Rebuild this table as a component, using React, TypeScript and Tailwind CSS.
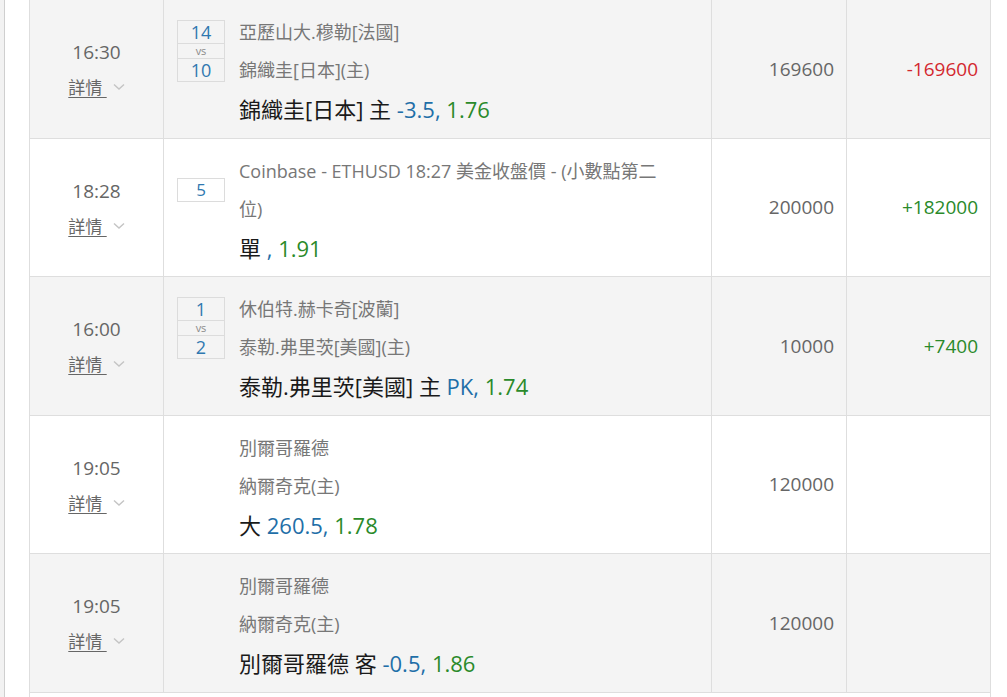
import React from 'react';

type Bet = {
  time: string;
  scores?: [string, string] | string;
  home?: string;
  away?: string;
  title?: string;
  label: string;
  line: string;
  odds: string;
  stake: string;
  result?: string;
};

const bets: Bet[] = [
  {
    time: '16:30',
    scores: ['14', '10'],
    home: '亞歷山大.穆勒[法國]',
    away: '錦織圭[日本](主)',
    label: '錦織圭[日本] 主',
    line: '-3.5',
    odds: '1.76',
    stake: '169600',
    result: '-169600',
  },
  {
    time: '18:28',
    scores: '5',
    title: 'Coinbase - ETHUSD 18:27 美金收盤價 - (小數點第二位)',
    label: '單',
    line: '',
    odds: '1.91',
    stake: '200000',
    result: '+182000',
  },
  {
    time: '16:00',
    scores: ['1', '2'],
    home: '休伯特.赫卡奇[波蘭]',
    away: '泰勒.弗里茨[美國](主)',
    label: '泰勒.弗里茨[美國] 主',
    line: 'PK',
    odds: '1.74',
    stake: '10000',
    result: '+7400',
  },
  {
    time: '19:05',
    home: '別爾哥羅德',
    away: '納爾奇克(主)',
    label: '大',
    line: '260.5',
    odds: '1.78',
    stake: '120000',
  },
  {
    time: '19:05',
    home: '別爾哥羅德',
    away: '納爾奇克(主)',
    label: '別爾哥羅德 客',
    line: '-0.5',
    odds: '1.86',
    stake: '120000',
  },
];

const ScoreBox = ({ scores }: { scores?: Bet['scores'] }) => {
  if (!scores) return null;
  if (typeof scores === 'string') {
    return (
      <div className="w-[48px] h-[24px] border border-[#dcdcdc] flex items-center justify-center text-[17px] text-[#2f78b0]">
        {scores}
      </div>
    );
  }
  return (
    <div className="w-[48px] border border-[#dcdcdc] flex flex-col text-[#2f78b0]">
      <div className="h-[22px] flex items-center justify-center text-[18px] leading-[22px]">{scores[0]}</div>
      <div className="h-[16px] border-y border-[#dcdcdc] text-center text-[11px] leading-[13px] text-[#8a8a8a]">vs</div>
      <div className="h-[22px] flex items-center justify-center text-[18px] leading-[22px]">{scores[1]}</div>
    </div>
  );
};

const Row = ({ bet, shaded }: { bet: Bet; shaded: boolean }) => {
  const resultColor = bet.result?.startsWith('-') ? 'text-[#d3272e]' : 'text-[#2a8a2a]';
  return (
    <div
      className={`grid grid-cols-[134px_548px_135px_144px] h-[138.5px] border-b border-[#dedede] ${
        shaded ? 'bg-[#f4f4f4]' : 'bg-white'
      }`}
    >
      <div className="border-r border-[#dedede] flex flex-col items-center justify-center pt-[3px]">
        <div className="text-[19px] leading-[36px] text-[#666]">{bet.time}</div>
        <div className="flex items-center leading-[36px] text-[17px] text-[#666]">
          <span className="underline underline-offset-[3px]">詳情&nbsp;</span>
          <svg width="12" height="8" viewBox="0 0 12 8" className="ml-[6px] mt-[-2px]">
            <path d="M1 1.5 L6 6 L11 1.5" fill="none" stroke="#c4c4c4" strokeWidth="1.4" />
          </svg>
        </div>
      </div>

      <div className="border-r border-[#dedede] flex pl-[13px] pr-[20px] pt-[13px]">
        <div className="w-[48px] h-[76px] shrink-0 flex items-center">
          <ScoreBox scores={bet.scores} />
        </div>
        <div className="ml-[14px] max-w-[432px]">
          {bet.title ? (
            <div className="text-[18px] leading-[38px] text-[#777]">{bet.title}</div>
          ) : (
            <>
              <div className="text-[18px] leading-[38px] text-[#777]">{bet.home}</div>
              <div className="text-[18px] leading-[38px] text-[#777]">{bet.away}</div>
            </>
          )}
          <div className="text-[22px] leading-[40px] text-[#1a1a1a] whitespace-nowrap">
            {bet.label} <span className="text-[#1f6fa8]">{bet.line},</span>{' '}
            <span className="text-[#2a8a2a]">{bet.odds}</span>
          </div>
        </div>
      </div>

      <div className="border-r border-[#dedede] flex items-center justify-end pr-[12px] text-[19px] text-[#666]">
        {bet.stake}
      </div>

      <div className={`flex items-center justify-end pr-[13px] text-[19px] ${resultColor}`}>{bet.result}</div>
    </div>
  );
};

export default function App() {
  return (
    <div className="flex min-h-screen bg-white font-['Open_Sans','Noto_Sans_CJK_TC',sans-serif]">
      <div className="w-[5px] shrink-0 bg-[#f2f2f2] border-r border-[#cfcfcf]" />
      <div className="pl-[24px]">
        <div className="w-[962px] border-x border-[#dedede]">
          {bets.map((bet, i) => (
            <Row key={i} bet={bet} shaded={i % 2 === 0} />
          ))}
          <div className="h-[40px] bg-white" />
        </div>
      </div>
    </div>
  );
}
